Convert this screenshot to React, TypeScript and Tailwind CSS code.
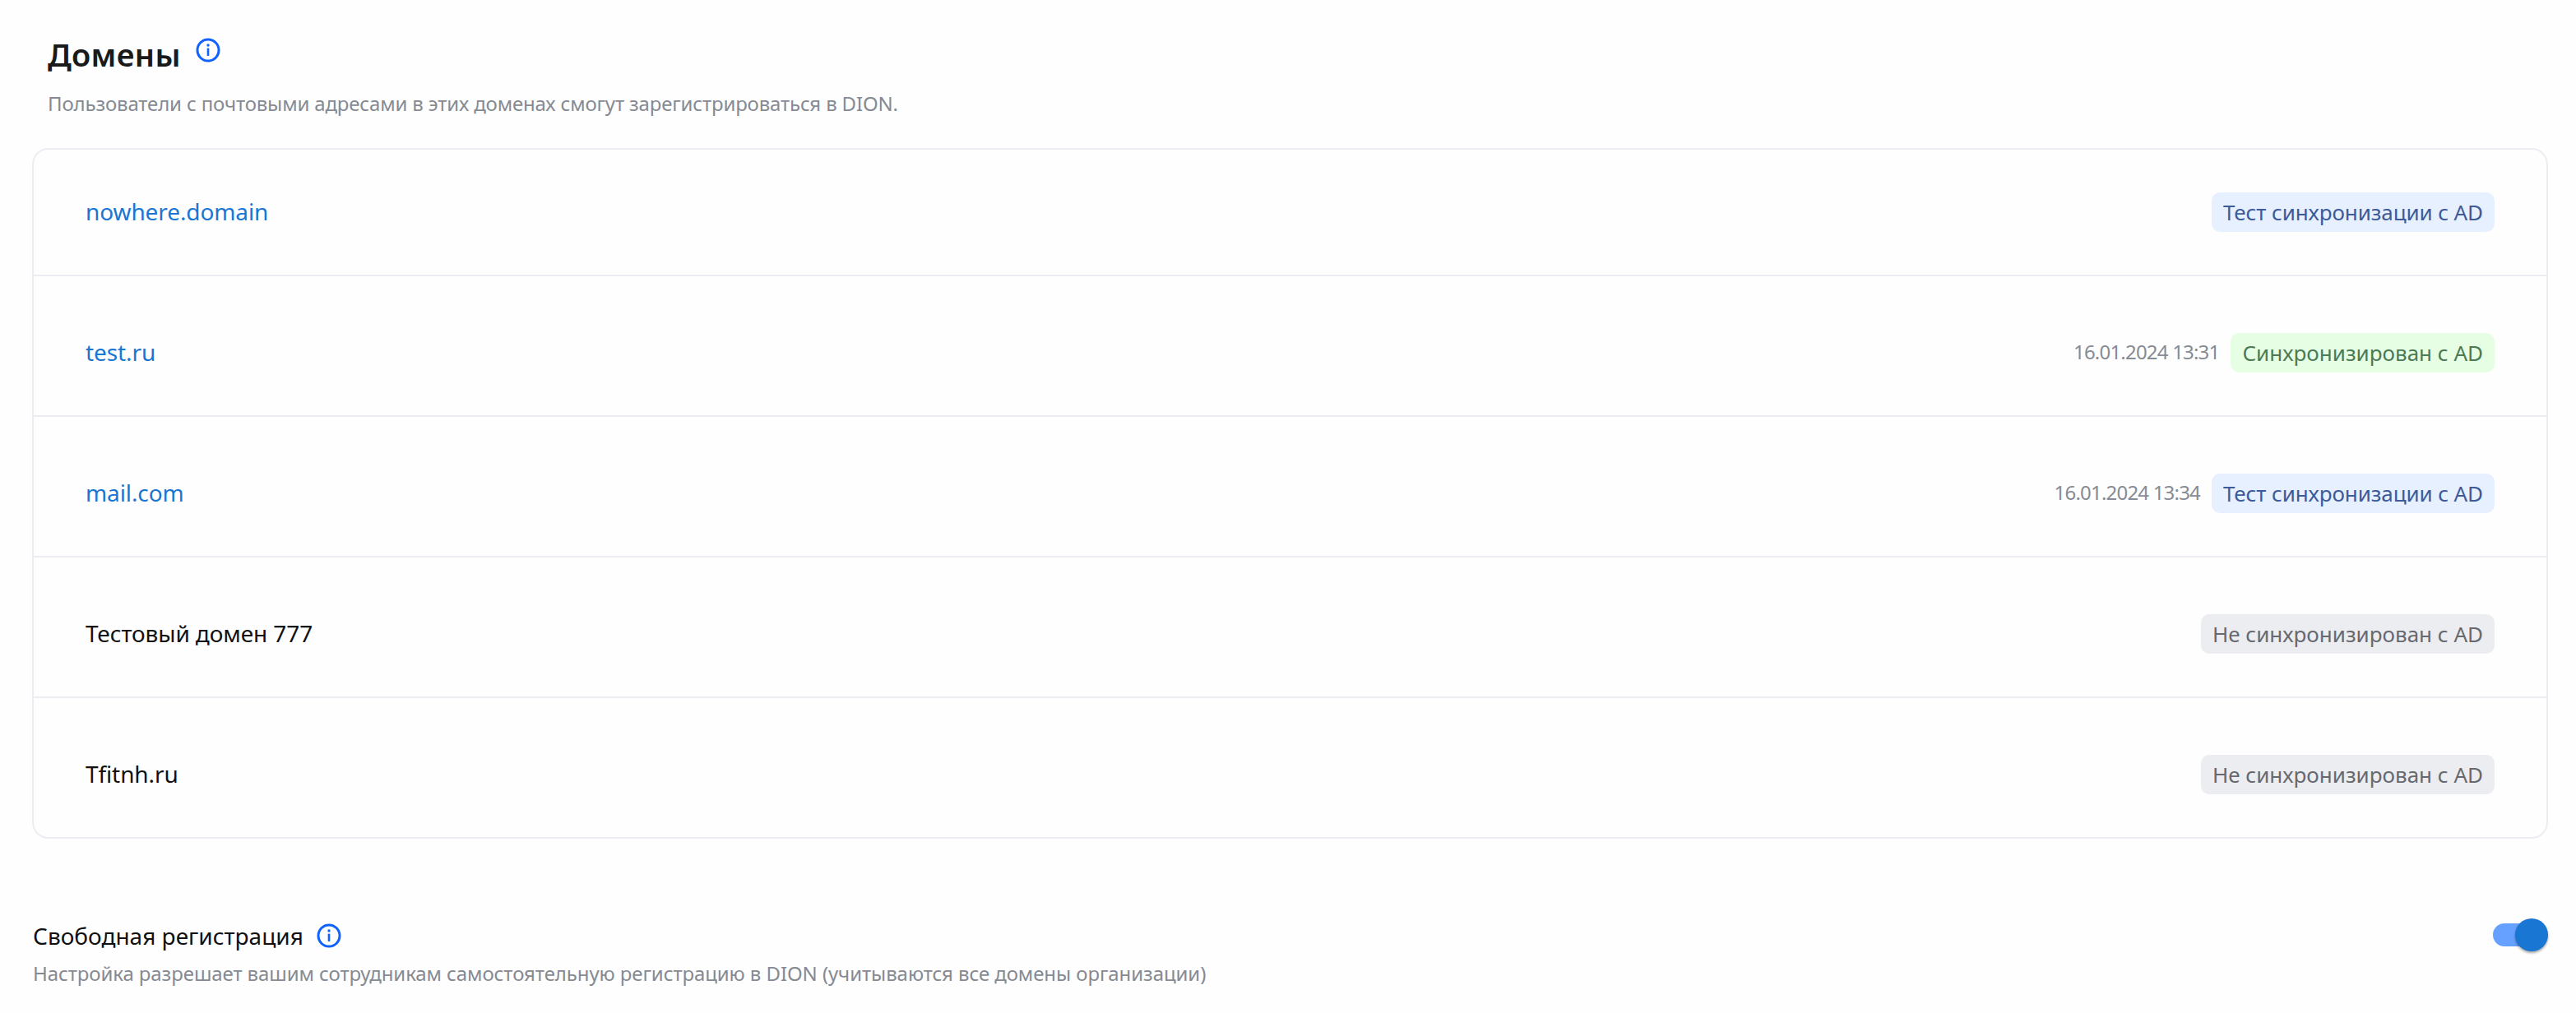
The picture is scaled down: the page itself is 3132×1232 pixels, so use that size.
const font = { fontFamily: '"Noto Sans", sans-serif' }

function InfoIcon({ className }: { className?: string }) {
  return (
    <svg viewBox="0 0 30 30" className={className} fill="none">
      <circle cx="15" cy="15" r="13" stroke="#0f62fe" strokeWidth="3" />
      <rect x="13.7" y="12.5" width="2.6" height="9.5" rx="0.8" fill="#0f62fe" />
      <circle cx="15" cy="9" r="1.7" fill="#0f62fe" />
    </svg>
  )
}

type Tone = 'blue' | 'green' | 'gray'

const toneClass: Record<Tone, string> = {
  blue: 'bg-[#e7f0ff] text-[#3d5a99] tracking-[-0.1px]',
  green: 'bg-[#e6ffe4] text-[#4b7a57]',
  gray: 'bg-[#ecedf0] text-[#666a70]',
}

interface Domain {
  name: string
  link?: boolean
  date?: string
  status: string
  tone: Tone
}

const domains: Domain[] = [
  { name: 'nowhere.domain', link: true, status: 'Тест синхронизации с AD', tone: 'blue' },
  { name: 'test.ru', link: true, date: '16.01.2024 13:31', status: 'Синхронизирован с AD', tone: 'green' },
  { name: 'mail.com', link: true, date: '16.01.2024 13:34', status: 'Тест синхронизации с AD', tone: 'blue' },
  { name: 'Тестовый домен 777', status: 'Не синхронизирован с AD', tone: 'gray' },
  { name: 'Tfitnh.ru', status: 'Не синхронизирован с AD', tone: 'gray' },
]

function DomainRow({ domain, first }: { domain: Domain; first: boolean }) {
  return (
    <div
      className={`flex items-center justify-between px-[63px] pb-[52px] ${
        first ? 'pt-[52px]' : 'pt-[69px] border-t-2 border-[#ecedf2]'
      }`}
    >
      <span
        className={`pb-[3px] text-[28px] leading-[40px] tracking-[-0.1px] ${
          domain.link ? 'text-[#1976d2]' : 'text-[#111111]'
        }`}
      >
        {domain.name}
      </span>
      <div className="flex items-center gap-[14px]">
        {domain.date && (
          <span className="pb-[3px] text-[24px] leading-[32px] tracking-[-0.8px] text-[#868b94]">{domain.date}</span>
        )}
        <span className={`h-[48px] px-[14px] rounded-[10px] text-[26px] leading-[48px] ${toneClass[domain.tone]}`}>
          {domain.status}
        </span>
      </div>
    </div>
  )
}

export default function App() {
  return (
    <div style={font} className="w-[3132px] h-[1232px] bg-[#fefefe] pt-[46px] pl-[39px] pr-[34px] overflow-hidden">
      <div className="pl-[19px]">
        <div className="flex items-start gap-[18px] h-[46px]">
          <h1 className="mt-[-2px] text-[38px] leading-[44px] tracking-[0.3px] font-semibold text-[#1a1a1a]">Домены</h1>
          <InfoIcon className="w-[30px] h-[30px]" />
        </div>
        <p className="mt-[18px] text-[24px] leading-[32px] tracking-[-0.16px] text-[#858a93]">
          Пользователи с почтовыми адресами в этих доменах смогут зарегистрироваться в DION.
        </p>
      </div>

      <div className="mt-[38px] border-2 border-[#ecedf2] rounded-[20px]">
        {domains.map((domain, i) => (
          <DomainRow key={domain.name} domain={domain} first={i === 0} />
        ))}
      </div>

      <div className="mt-[96px] flex items-start justify-between">
        <div className="pl-[1px]">
          <div className="flex items-center gap-[16px] h-[44px]">
            <span className="text-[28px] leading-[40px] text-[#111111]">Свободная регистрация</span>
            <InfoIcon className="w-[30px] h-[30px]" />
          </div>
          <p className="mt-[8px] text-[24px] leading-[32px] tracking-[-0.09px] text-[#858a93]">
            Настройка разрешает вашим сотрудникам самостоятельную регистрацию в DION (учитываются все домены организации)
          </p>
        </div>
        <div className="relative mt-[1px] w-[67px] h-[40px] flex items-center">
          <div className="w-[60px] h-[28px] rounded-full bg-[#66a1ff]" />
          <div className="absolute right-0 top-0 w-[40px] h-[40px] rounded-full bg-[#1976d2] shadow-[0_2px_3px_rgba(0,0,0,0.35)]" />
        </div>
      </div>
    </div>
  )
}
